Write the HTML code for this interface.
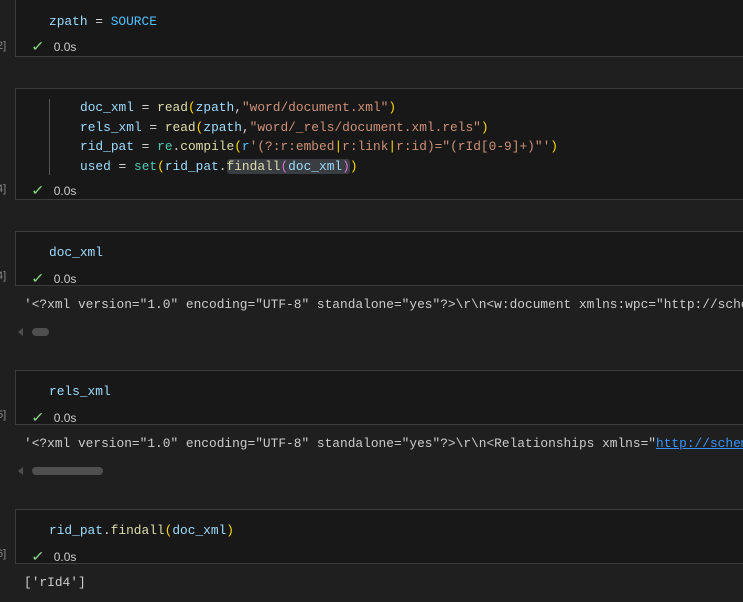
<!DOCTYPE html>
<html><head><meta charset="utf-8"><style>
html,body{margin:0;width:743px;height:602px;overflow:hidden;}
body{background:#1f1f1f;position:relative;font-family:"Liberation Mono",monospace;font-size:12.85px;}
.cell{position:absolute;left:15px;width:728px;box-sizing:border-box;background:#181818;border:1px solid #3c3c3c;border-right:none;}
.code{position:absolute;white-space:pre;color:#9cdcfe;line-height:19.5px;}
.st{position:absolute;left:16px;font-family:"Liberation Sans",sans-serif;font-size:12px;color:#cccccc;}
.st .ck{color:#89d185;font-size:14px;margin-right:10px;display:inline-block;transform:scaleX(1.2);}
.num{position:absolute;left:-3px;font-size:11px;color:#888;font-family:"Liberation Sans",sans-serif;}
.out{position:absolute;left:24px;width:719px;overflow:hidden;white-space:pre;color:#cccccc;}
.scr{position:absolute;height:8px;border-radius:4px;background:#4f4f4f;}
.arr{position:absolute;left:18px;width:0;height:0;border-top:4px solid transparent;border-bottom:4px solid transparent;border-right:5px solid #4f4f4f;}
.f{color:#dcdcaa}.s{color:#ce9178}.y{color:#ffd700}.p{color:#da70d6}.c{color:#4fc1ff}.t{color:#4ec9b0}.w{color:#d4d4d4}
</style></head><body>
<div class="cell" style="top:-1px;height:58px">
 <div class="code" style="left:33px;top:12px">zpath <span class="w">=</span> <span class="c">SOURCE</span></div>
 <div class="st" style="top:38px"><span class="ck">✓</span>0.0s</div>
</div>
<div class="num" style="top:40px">2]</div>

<div class="cell" style="top:88px;height:112px">
 <div style="position:absolute;left:33px;top:10px;width:1px;height:76px;background:#555"></div>
 <div class="code" style="left:64px;top:9px">doc_xml <span class="w">=</span> <span class="f">read</span><span class="y">(</span>zpath<span class="w">,</span><span class="s">"word/document.xml"</span><span class="y">)</span>
rels_xml <span class="w">=</span> <span class="f">read</span><span class="y">(</span>zpath<span class="w">,</span><span class="s">"word/_rels/document.xml.rels"</span><span class="y">)</span>
rid_pat <span class="w">=</span> <span class="t">re</span><span class="w">.</span><span class="f">compile</span><span class="y">(</span><span class="c">r</span><span class="s">'(?:r:embed<span class="y">|</span>r:link<span class="y">|</span>r:id)="(rId[0-9]+)"'</span><span class="y">)</span>
used <span class="w">=</span> <span class="t">set</span><span class="y">(</span>rid_pat<span class="w">.</span><span style="background:#3a3d41;border-radius:3px"><span class="f">findall</span><span class="p">(</span>doc_xml<span class="p">)</span></span><span class="y">)</span></div>
 <div class="st" style="top:93px"><span class="ck">✓</span>0.0s</div>
</div>
<div class="num" style="top:183px">4]</div>

<div class="cell" style="top:231px;height:55px">
 <div class="code" style="left:33px;top:11px">doc_xml</div>
 <div class="st" style="top:38px"><span class="ck">✓</span>0.0s</div>
</div>
<div class="num" style="top:270px">4]</div>
<div class="out" style="top:297px">'&lt;?xml version="1.0" encoding="UTF-8" standalone="yes"?&gt;\r\n&lt;w:document xmlns:wpc="http://schemas</div>
<div class="arr" style="top:328px"></div>
<div class="scr" style="left:32px;top:328px;width:17px"></div>

<div class="cell" style="top:370px;height:55px">
 <div class="code" style="left:33px;top:11px">rels_xml</div>
 <div class="st" style="top:38px"><span class="ck">✓</span>0.0s</div>
</div>
<div class="num" style="top:409px">5]</div>
<div class="out" style="top:436px">'&lt;?xml version="1.0" encoding="UTF-8" standalone="yes"?&gt;\r\n&lt;Relationships xmlns="<span style="color:#3794ff;text-decoration:underline">http://schemas</span></div>
<div class="arr" style="top:467px"></div>
<div class="scr" style="left:32px;top:467px;width:71px"></div>

<div class="cell" style="top:509px;height:55px">
 <div class="code" style="left:33px;top:11px">rid_pat<span class="w">.</span><span class="f">findall</span><span class="y">(</span>doc_xml<span class="y">)</span></div>
 <div class="st" style="top:38px"><span class="ck">✓</span>0.0s</div>
</div>
<div class="num" style="top:548px">6]</div>
<div class="out" style="top:575px">['rId4']</div>
</body></html>
